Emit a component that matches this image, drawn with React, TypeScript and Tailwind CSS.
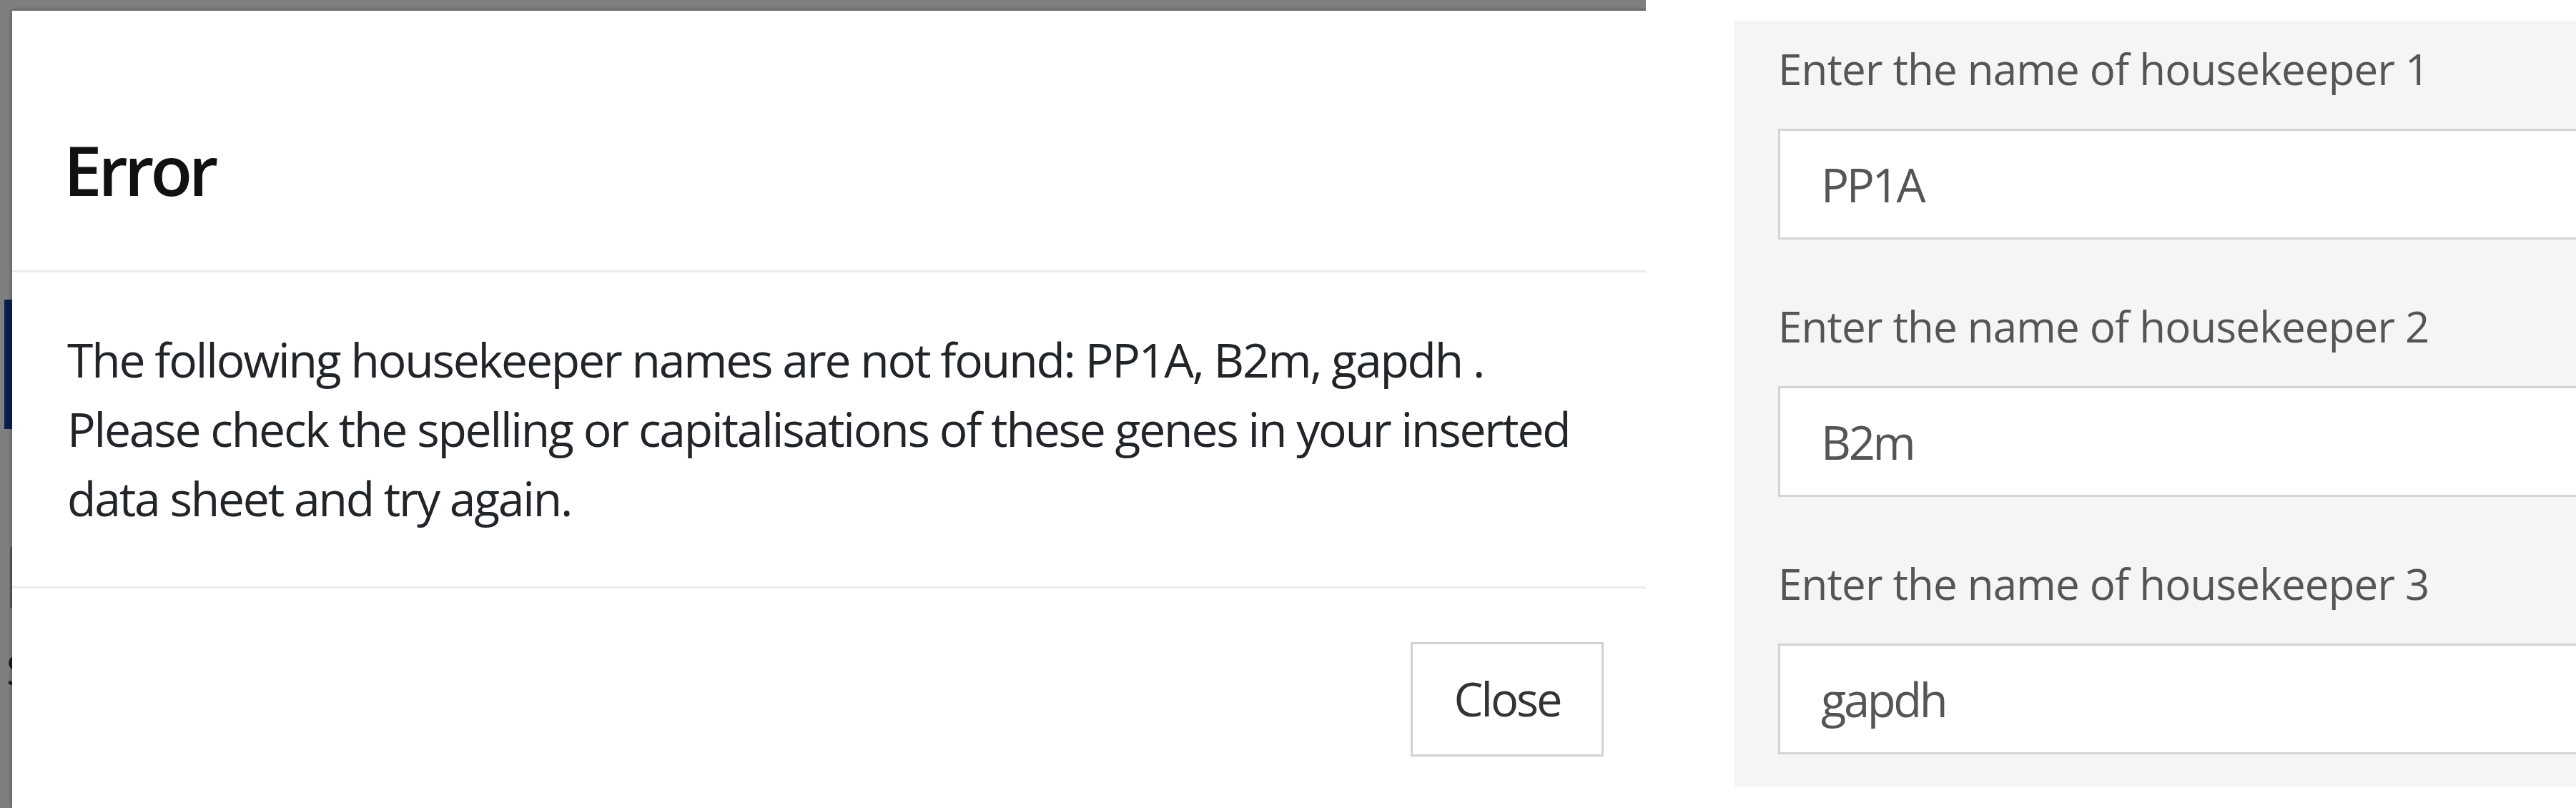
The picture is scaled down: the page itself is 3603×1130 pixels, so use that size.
import React from 'react';

const fields = [
  { label: 'Enter the name of housekeeper 1', value: 'PP1A' },
  { label: 'Enter the name of housekeeper 2', value: 'B2m' },
  { label: 'Enter the name of housekeeper 3', value: 'gapdh' },
];

const messageLines = [
  'The following housekeeper names are not found: PP1A, B2m, gapdh .',
  'Please check the spelling or capitalisations of these genes in your inserted',
  'data sheet and try again.',
];

function ErrorModalShot() {
  return (
    <div className="flex h-full w-[2302px] shrink-0 flex-col overflow-hidden bg-[#7f7f7f]">
      <div className="h-[15px] shrink-0" />
      <div className="flex min-h-0 flex-1">
        {/* page content peeking through the backdrop */}
        <div className="flex w-[17px] shrink-0 flex-col items-end overflow-hidden">
          <div className="mt-[404px] h-[181px] w-[11px] bg-[#0b1f4e]" />
          <div className="mt-[165px] h-[85px] w-[3px] bg-[#5e5a4e]" />
          <div className="mt-[58px] w-[17px] overflow-hidden whitespace-nowrap pl-[9px] text-[56px] leading-none text-[#1d1d1d]">
            S
          </div>
        </div>

        <div className="flex flex-1 flex-col bg-white font-['Open_Sans','Noto_Sans',sans-serif] shadow-[0_0_6px_rgba(0,0,0,0.45)]">
          <div className="border-b-[3px] border-[#ececec] pb-[84px] pl-[72px] pt-[164px]">
            <h2 className="text-[96px] font-semibold leading-[1.2] tracking-[-5px] text-[#111]">Error</h2>
          </div>

          <div className="pb-[75px] pl-[77px] pt-[73px] text-[66px] leading-[97px] tracking-[-2.2px] text-[#212529]">
            {messageLines.map((line) => (
              <div key={line} className="whitespace-nowrap">
                {line}
              </div>
            ))}
          </div>

          <div className="flex flex-1 justify-end border-t-[3px] border-[#ececec] pr-[59px] pt-[75px]">
            <button className="flex h-[160px] w-[270px] items-center justify-center border-[3px] border-[#d2d2d2] bg-white text-[65px] tracking-[-3px] text-[#333]">
              Close
            </button>
          </div>
        </div>
      </div>
    </div>
  );
}

function HousekeeperForm() {
  return (
    <div className="flex flex-1 flex-col overflow-hidden pb-[30px] pl-[124px] pt-[29px]">
      <div className="flex flex-1 flex-col overflow-hidden bg-[#f5f5f5] pb-[46px] pl-[61px] pt-[22px] font-['Open_Sans','Noto_Sans',sans-serif]">
        {fields.map((f, i) => (
          <div key={f.label} className={i > 0 ? 'mt-[76px]' : ''}>
            <label className="block whitespace-nowrap text-[60px] leading-[90px] tracking-[-0.8px] text-[#555]">
              {f.label}
            </label>
            <input
              readOnly
              value={f.value}
              className="mt-[39px] block h-[155px] w-[1300px] border-[3px] border-[#d4d4d4] bg-white pl-[57px] text-[65px] tracking-[-3.3px] text-[#555] outline-none"
            />
          </div>
        ))}
      </div>
    </div>
  );
}

export default function App() {
  return (
    <div className="flex h-[1130px] w-[3603px] overflow-hidden bg-white">
      <ErrorModalShot />
      <HousekeeperForm />
    </div>
  );
}
